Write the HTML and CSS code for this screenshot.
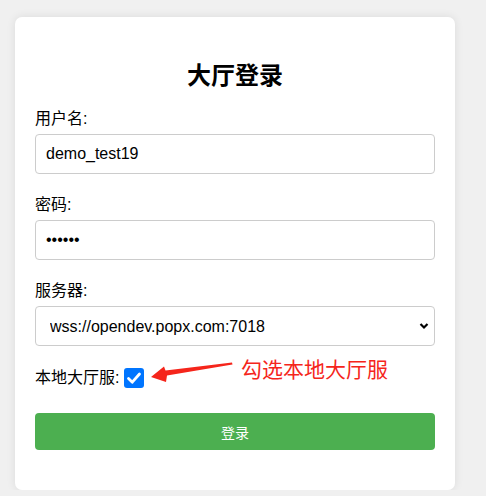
FILE: index.html
```html
<!DOCTYPE html>
<html lang="zh-CN">
<head>
<meta charset="utf-8">
<title>大厅登录</title>
<link rel="stylesheet" href="styles.css">
</head>
<body>
<div class="card">
  <h2 class="title">大厅登录</h2>
  <div class="group">
    <label class="label" for="user">用户名:</label>
    <input class="field" id="user" type="text" value="demo_test19">
  </div>
  <div class="group">
    <label class="label" for="pwd">密码:</label>
    <input class="field" id="pwd" type="password" value="123456">
  </div>
  <div class="group">
    <label class="label" for="srv">服务器:</label>
    <div class="select-wrap">
      <select class="field select" id="srv">
        <option>wss://opendev.popx.com:7018</option>
      </select>
      <svg class="chev" width="10" height="8" viewBox="0 0 10 8"><path d="M1.5 2 L5 5.5 L8.5 2" fill="none" stroke="#000" stroke-width="2.2"/></svg>
    </div>
  </div>
  <div class="check-row">
    <span class="label-inline">本地大厅服:</span>
    <span class="box"><svg width="20" height="20" viewBox="0 0 20 20"><path d="M4.5 10.5 L8.3 14.2 L15.5 6" fill="none" stroke="#fff" stroke-width="2.8" stroke-linecap="round" stroke-linejoin="round"/></svg></span>
    <svg class="arrow" width="90" height="30" viewBox="0 0 90 30"><polygon points="0,16 13,5.5 14.5,9.5 81,1.5 81.5,3.5 16,14.5 15,21" fill="#f5251b"/></svg>
    <span class="note">勾选本地大厅服</span>
  </div>
  <button class="btn" type="button">登录</button>
</div>
</body>
</html>
```
FILE: styles.css
```css
html, body {
  margin: 0;
  padding: 0;
}
body {
  background: #f0f0f0;
  font-family: "Liberation Sans", Arial, "Noto Sans CJK SC", sans-serif;
  color: #000;
}
.card {
  margin: 17px 0 0 15px;
  width: 440px;
  box-sizing: border-box;
  padding: 20px 20px 40px;
  background: #fff;
  border-radius: 7px;
  box-shadow: 0 0 10px rgba(0, 0, 0, 0.09);
}
.title {
  margin: 23px 0 22px;
  font-size: 24px;
  line-height: 28px;
  font-weight: bold;
  text-align: center;
  font-family: "Noto Sans CJK SC", sans-serif;
}
.group {
  display: flex;
  flex-direction: column;
  margin-bottom: 22px;
}
.label {
  font-size: 16px;
  line-height: 18px;
  margin-bottom: 6px;
  font-family: "Liberation Sans", "Noto Sans CJK SC", sans-serif;
}
.field {
  box-sizing: border-box;
  width: 400px;
  height: 40px;
  margin: 0;
  padding: 0 10px;
  border: 1px solid #ccc;
  border-radius: 4px;
  font-family: "Liberation Sans", Arial, sans-serif;
  font-size: 16px;
  color: #000;
  background: #fff;
  outline: none;
}
.select-wrap {
  position: relative;
}
.select {
  appearance: none;
  -webkit-appearance: none;
  padding-left: 14px;
}
.chev {
  position: absolute;
  right: 6px;
  top: 16px;
}
.check-row {
  position: relative;
  display: flex;
  align-items: center;
  height: 20px;
  margin-bottom: 25px;
}
.label-inline {
  font-size: 16px;
  line-height: 18px;
  margin-right: 5px;
}
.box {
  display: inline-flex;
  width: 20px;
  height: 20px;
  border-radius: 3px;
  background: #0075ff;
}
.arrow {
  position: absolute;
  left: 116px;
  top: -7px;
}
.note {
  position: absolute;
  left: 206px;
  top: -13px;
  color: #f5251b;
  font-size: 21px;
  line-height: 26px;
  font-family: "Noto Sans CJK SC", sans-serif;
}
.btn {
  display: block;
  width: 400px;
  height: 37px;
  border: none;
  border-radius: 4px;
  background: #4caf50;
  color: #fff;
  font-size: 14px;
  font-family: "Noto Sans CJK SC", sans-serif;
  cursor: pointer;
}
```
